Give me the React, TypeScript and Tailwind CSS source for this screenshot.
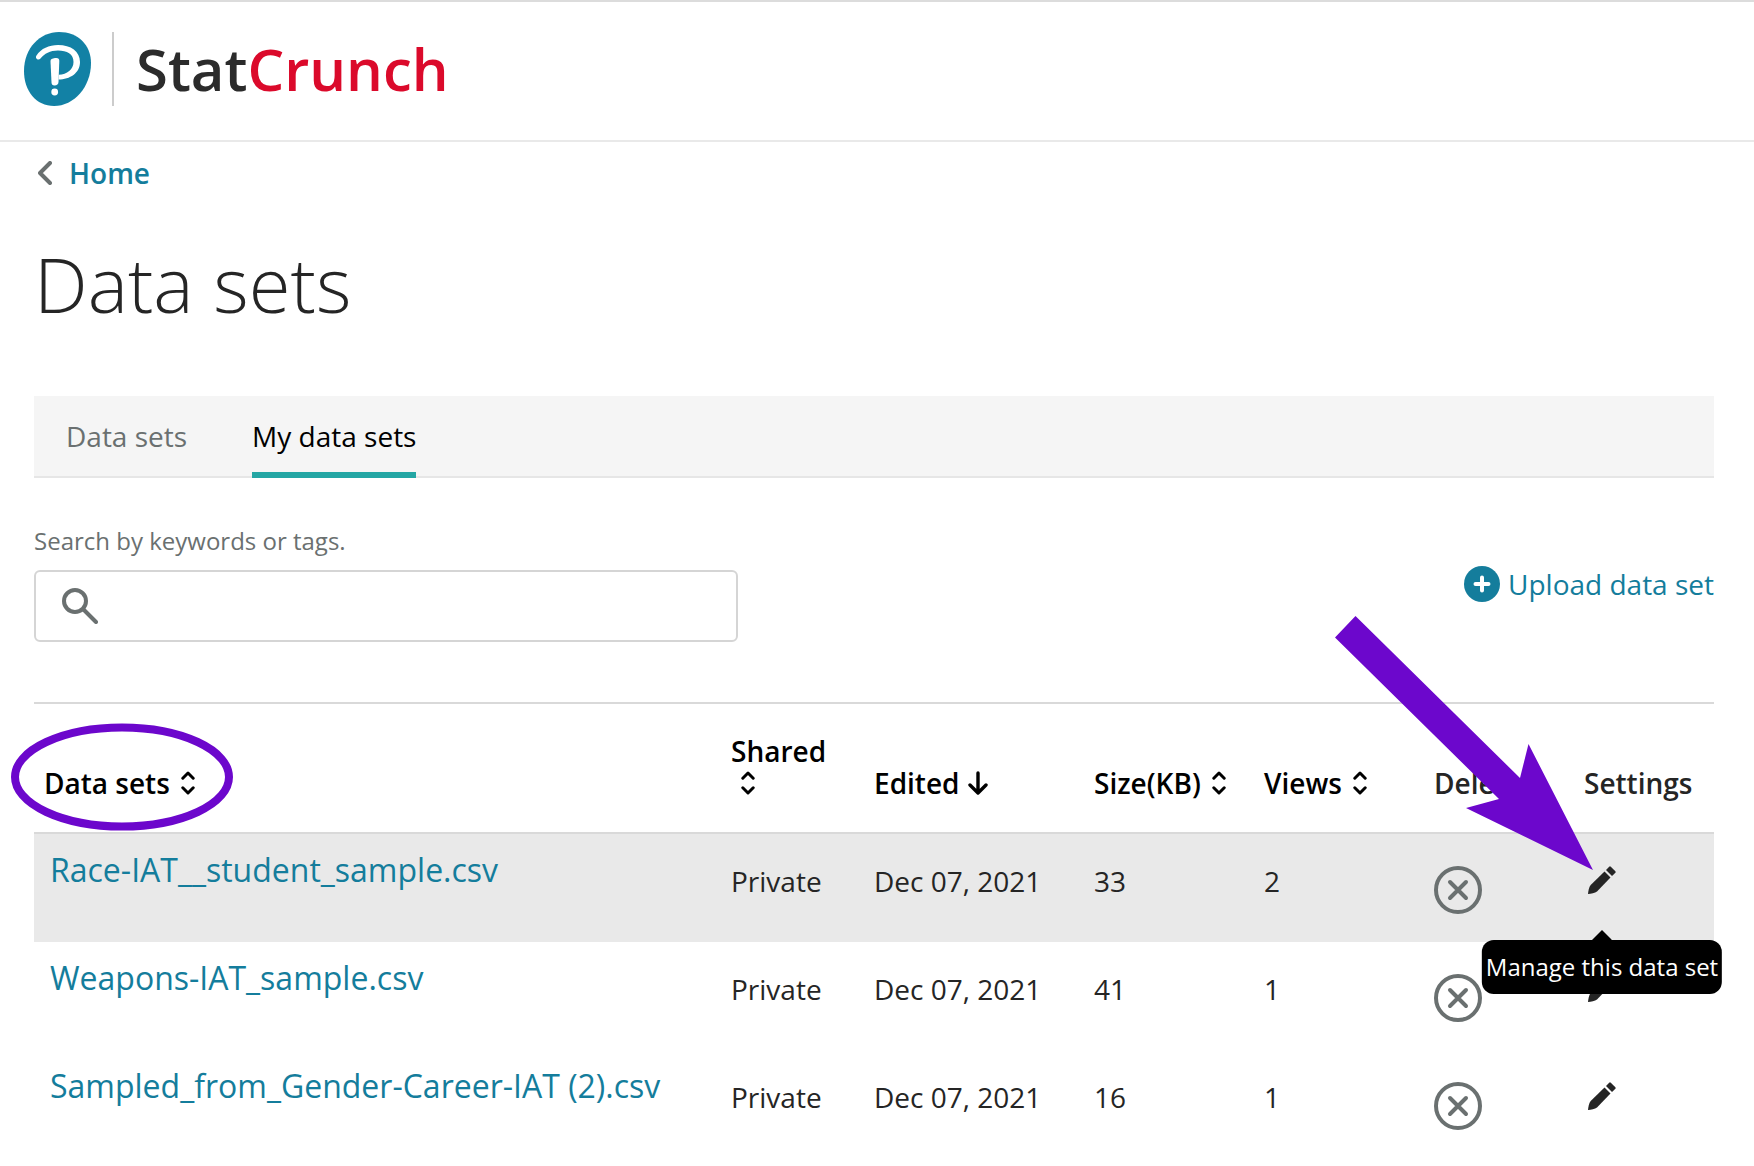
import { useState } from 'react';
import type { ReactNode } from 'react';

type DataSet = {
  name: string;
  shared: string;
  edited: string;
  size: number;
  views: number;
};

const DATA_SETS: DataSet[] = [
  { name: 'Race-IAT__student_sample.csv', shared: 'Private', edited: 'Dec 07, 2021', size: 33, views: 2 },
  { name: 'Weapons-IAT_sample.csv', shared: 'Private', edited: 'Dec 07, 2021', size: 41, views: 1 },
  { name: 'Sampled_from_Gender-Career-IAT (2).csv', shared: 'Private', edited: 'Dec 07, 2021', size: 16, views: 1 },
];

const TABS = ['Data sets', 'My data sets'];

function PearsonLogo() {
  return (
    <svg width="67" height="74" viewBox="0 0 67 74" aria-hidden="true">
      <path d="M35 0C54 0 67 13 67 31C67 55 50 74 30 74C12 74 0 59 0 39C0 16 16 0 35 0Z" fill="#1281a5" />
      <path
        d="M12.500 23.500C17 16.500 25 13 34 13C47 13 56 19.500 56 30C56 41 46 47.500 34.500 47.500L34.800 42.800C43 42.500 49.500 37.500 49.500 30C49.500 22 43 18.500 34 18.500C26 18.500 20.500 21.500 16.500 26.500C14.500 29 10.500 26.500 12.500 23.500Z"
        fill="#fff"
      />
      <path d="M26.500 29C26.500 27 28 26.500 31 26C34 25.500 35.300 26.500 35.300 29L34.500 50C34.400 52 33 53.500 30.500 53.500C28.500 53.500 27.600 52.500 27.500 50.500Z" fill="#fff" />
      <circle cx="30.700" cy="60" r="3.400" fill="#fff" />
    </svg>
  );
}

function SortIcon() {
  return (
    <svg width="20" height="24" viewBox="-3 0 20 24" fill="none" stroke="currentColor" strokeWidth="3" strokeLinecap="round" strokeLinejoin="round" aria-hidden="true">
      <path d="M1.800 7.200L7 2L12.200 7.200M1.800 16.800L7 22L12.200 16.800" />
    </svg>
  );
}

function ArrowDownIcon() {
  return (
    <svg width="20" height="24" viewBox="0 0 20 24" fill="none" stroke="currentColor" strokeWidth="3.400" strokeLinecap="round" strokeLinejoin="round" aria-hidden="true">
      <path d="M10 2V21.500M2 14L10 22L18 14" />
    </svg>
  );
}

function DeleteIcon() {
  return (
    <svg width="48" height="48" viewBox="0 0 48 48" fill="none" stroke="#6a7070" strokeWidth="4" strokeLinecap="round" aria-hidden="true">
      <circle cx="24" cy="24" r="22" />
      <path d="M16 16L32 32M32 16L16 32" />
    </svg>
  );
}

function PencilIcon() {
  return (
    <svg width="28" height="28" viewBox="0 0 28 28" fill="#252525" aria-hidden="true">
      <path d="M16.500 5.500L22.500 11.500L9 25.500C7 27 3 27.600 0 28C0.300 25 1 21 2.700 19Z" />
      <path d="M18 4L21.200 0.700Q22 0 22.800 0.700L27.400 5.300Q28 6 27.400 6.800L24 10Z" />
    </svg>
  );
}

function HeaderButton({ children, icon }: { children: ReactNode; icon: ReactNode }) {
  return (
    <button type="button" className="flex items-center gap-2 text-left font-semibold text-black">
      {children}
      {icon}
    </button>
  );
}

export default function App() {
  const [tab, setTab] = useState('My data sets');

  return (
    <div className="min-h-screen overflow-x-hidden bg-white font-['Open_Sans',sans-serif] text-[28px] text-[#252525]">
      <header className="flex items-center border-t-2 border-b-2 border-t-[#dcdcdc] border-b-[#e9e9e9] px-6 pt-[30px] pb-[34px]">
        <PearsonLogo />
        <div className="ml-[21px] h-[74px] w-[2px] bg-[#cccccc]" />
        <div className="ml-[22px] text-[58px] leading-[74px] font-semibold text-[#2b2b2b]">
          Stat<span className="text-[#db0a2b]">Crunch</span>
        </div>
      </header>

      <main className="pr-10 pl-[34px]">
        <a href="#home" className="inline-flex items-center gap-[17px] pt-3 pl-1 align-top leading-[38px] font-semibold text-[#147d9c]">
          <svg width="14" height="24" viewBox="0 0 14 24" fill="none" stroke="#6a7070" strokeWidth="4" strokeLinecap="round" strokeLinejoin="round" aria-hidden="true">
            <path d="M12 2L2 12L12 22" />
          </svg>
          Home
        </a>

        <h1 className="mt-10 text-[76px] leading-[104px] font-light">Data sets</h1>

        <nav className="mt-15 flex gap-[65px] border-b-2 border-[#e6e6e6] bg-[#f5f5f5] px-8">
          {TABS.map((t) => (
            <button
              key={t}
              type="button"
              onClick={() => setTab(t)}
              className={
                t === tab
                  ? '-mb-[2px] border-b-6 border-[#24a6a4] pt-5 pb-4 leading-10 text-black'
                  : '-mb-[2px] border-b-6 border-transparent pt-5 pb-4 leading-10 text-[#6a7070]'
              }
            >
              {t}
            </button>
          ))}
        </nav>

        <div className="mt-[47px] flex items-center justify-between">
          <div className="w-[42%] max-w-[704px]">
            <label htmlFor="search" className="block text-2xl leading-8 text-[#6a7070]">
              Search by keywords or tags.
            </label>
            <div className="mt-[13px] flex h-[72px] items-center rounded-md border-2 border-[#d5d5d5] pl-[26px]">
              <svg width="36" height="36" viewBox="0 0 36 36" fill="none" stroke="#6a7070" strokeWidth="4" strokeLinecap="round" aria-hidden="true">
                <circle cx="13" cy="13" r="11" />
                <path d="M21.500 21.500L34 34" />
              </svg>
              <input id="search" type="text" className="h-full min-w-0 flex-1 px-4 outline-none" />
            </div>
          </div>
          <a href="#upload" className="flex items-center gap-2 leading-[38px] text-[#147d9c]">
            <svg width="36" height="36" viewBox="0 0 36 36" aria-hidden="true">
              <circle cx="18" cy="18" r="18" fill="#147d9c" />
              <path d="M18 11.500V24.500M11.500 18H24.500" stroke="#fff" strokeWidth="4" strokeLinecap="round" />
            </svg>
            Upload data set
          </a>
        </div>

        <table className="mt-15 w-full table-fixed border-separate border-spacing-0 text-left">
          <colgroup>
            <col />
            <col className="w-[143px]" />
            <col className="w-[220px]" />
            <col className="w-[170px]" />
            <col className="w-[170px]" />
            <col className="w-[150px]" />
            <col className="w-[130px]" />
          </colgroup>
          <thead>
            <tr className="align-bottom leading-8 [&>th]:border-y-2 [&>th]:border-[#d9d9d9] [&>th]:pt-[31px] [&>th]:pb-[33px] [&>th]:font-semibold">
              <th className="pl-[10px]">
                <div className="relative w-fit">
                  <HeaderButton icon={<SortIcon />}>Data sets</HeaderButton>
                  <svg className="pointer-events-none absolute -top-11 -left-[33px]" width="222" height="108" viewBox="0 0 222 108" fill="none" aria-hidden="true">
                    <ellipse cx="111" cy="54" rx="107" ry="49.500" stroke="#6c07cc" strokeWidth="8" />
                  </svg>
                </div>
              </th>
              <th>
                <button type="button" className="block text-left font-semibold text-black">
                  <span className="block">Shared</span>
                  <span className="flex h-8 items-center pl-[7px]">
                    <SortIcon />
                  </span>
                </button>
              </th>
              <th>
                <HeaderButton icon={<ArrowDownIcon />}>Edited</HeaderButton>
              </th>
              <th>
                <HeaderButton icon={<SortIcon />}>Size(KB)</HeaderButton>
              </th>
              <th>
                <HeaderButton icon={<SortIcon />}>Views</HeaderButton>
              </th>
              <th>Delete</th>
              <th>
                <div className="relative">
                  Settings
                  <svg className="pointer-events-none absolute right-full bottom-0 -mr-[9px] -mb-[71px]" width="258" height="254" viewBox="0 0 258 254" aria-hidden="true">
                    <path d="M20.500 0L185 162L193.500 128L258 254L131 192L164 183L0 21.500Z" fill="#6c07cc" />
                  </svg>
                </div>
              </th>
            </tr>
          </thead>
          <tbody>
            {DATA_SETS.map((d, i) => (
              <tr key={d.name} className={i === 0 ? 'h-27 bg-[#e9e9e9] align-top leading-8' : 'h-27 align-top leading-8'}>
                <td className="pt-4 pl-4">
                  <a href="#dataset" className="block text-[32px] leading-10 text-[#147d9c]">
                    {d.name}
                  </a>
                </td>
                <td className="pt-[31px]">{d.shared}</td>
                <td className="pt-[31px]">{d.edited}</td>
                <td className="pt-[31px]">{d.size}</td>
                <td className="pt-[31px]">{d.views}</td>
                <td className="pt-8">
                  <button type="button" aria-label="Delete" className="block">
                    <DeleteIcon />
                  </button>
                </td>
                <td className="pt-8 pl-1">
                  <div className="relative w-fit">
                    <button type="button" aria-label="Manage" className="block">
                      <PencilIcon />
                    </button>
                    {i === 0 && (
                      <div role="tooltip" className="absolute top-full left-1/2 z-10 mt-9 -translate-x-1/2">
                        <div className="mx-auto h-[10px] w-5 bg-black [clip-path:polygon(50%_0,100%_100%,0_100%)]" />
                        <div className="rounded-xl bg-black px-1 text-2xl leading-[54px] whitespace-nowrap text-white">
                          Manage this data set
                        </div>
                      </div>
                    )}
                  </div>
                </td>
              </tr>
            ))}
          </tbody>
        </table>
      </main>
    </div>
  );
}
